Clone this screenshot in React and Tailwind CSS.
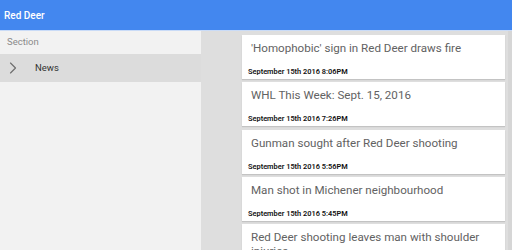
import { ChevronRight } from 'lucide-react'

const stories = [
  { title: "'Homophobic' sign in Red Deer draws fire", date: 'September 15th 2016 8:06PM' },
  { title: 'WHL This Week: Sept. 15, 2016', date: 'September 15th 2016 7:26PM' },
  { title: 'Gunman sought after Red Deer shooting', date: 'September 15th 2016 5:56PM' },
  { title: 'Man shot in Michener neighbourhood', date: 'September 15th 2016 5:45PM' },
  { title: 'Red Deer shooting leaves man with shoulder injuries', date: 'September 15th 2016 5:30PM' },
]

function StoryCard({ title, date }) {
  return (
    <div className="bg-white min-h-[44px] shrink-0 flex flex-col shadow-[0_1px_1px_rgba(0,0,0,0.12)]">
      <p className="pl-[9px] pr-3 pt-[6px] text-[11.6px] leading-[14px] text-[#626262]">{title}</p>
      <p className="mt-auto pl-[6px] pb-[3px] text-[7.4px] leading-[9px] font-semibold text-[#111]">{date}</p>
    </div>
  )
}

export default function App() {
  return (
    <div className="w-[512px] h-[250px] overflow-hidden flex flex-col" style={{ fontFamily: 'Roboto, "Noto Sans", sans-serif' }}>
      <header className="h-[30px] shrink-0 bg-[#4387ef] flex items-center px-[4px]">
        <span className="text-white text-[10px] font-medium">Red Deer</span>
      </header>
      <div className="flex flex-1 min-h-0 border-t border-[#c9dbf7]">
        <aside className="w-[201px] shrink-0 bg-[#f2f2f2] flex flex-col">
          <div className="h-[23px] flex items-center pl-[7px] text-[9.5px] text-[#8a8a8a]">Section</div>
          <div className="h-[28px] bg-[#dcdcdc] flex items-center">
            <ChevronRight className="ml-[3px] w-[20px] h-[20px] text-[#6e6e6e]" strokeWidth={1.4} />
            <span className="ml-[12px] text-[9.5px] text-[#333]">News</span>
          </div>
        </aside>
        <main className="flex-1 bg-[#dedede] flex">
          <div className="ml-[41px] w-[263px] pt-[4px] flex flex-col gap-[3.3px]">
            {stories.map((s) => (
              <StoryCard key={s.date} {...s} />
            ))}
          </div>
          <div className="ml-auto w-[4px] bg-[#d6d6d6]" />
        </main>
      </div>
    </div>
  )
}
